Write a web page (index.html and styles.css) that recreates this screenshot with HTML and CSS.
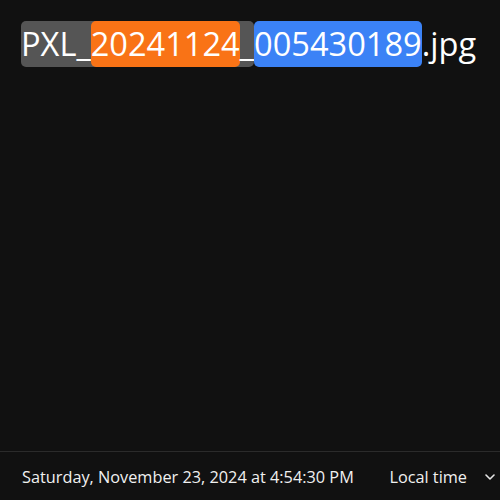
FILE: index.html
```html
<!DOCTYPE html>
<html lang="en">
<head>
<meta charset="utf-8">
<link rel="stylesheet" href="styles.css">
</head>
<body>
<div class="page">
  <main class="main">
    <h1 class="filename"><span class="seg-prefix">PXL_<span class="seg-date">20241124</span>_</span><span class="seg-time">005430189</span>.jpg</h1>
  </main>
  <footer class="footer">
    <span class="datetime">Saturday, November 23, 2024 at 4:54:30 PM</span>
    <div class="tz">
      <span class="tz-label">Local time</span>
      <svg class="chevron" width="10" height="6" viewBox="0 0 10 6"><path d="M1 1l4 4 4-4" fill="none" stroke="#e6e6e6" stroke-width="1.6" stroke-linecap="round" stroke-linejoin="round"/></svg>
    </div>
  </footer>
</div>
</body>
</html>
```
FILE: styles.css
```css
html, body {
  margin: 0;
  padding: 0;
  background: #111111;
  color: #ffffff;
  font-family: "Open Sans", "Noto Sans", sans-serif;
}
.page {
  display: flex;
  flex-direction: column;
  height: 100vh;
}
.main {
  flex: 1;
  padding: 21px 21px 0 21px;
}
.filename {
  margin: 0;
  font-size: 32.6px;
  font-weight: 400;
  line-height: 46px;
  white-space: nowrap;
}
.seg-prefix {
  display: inline-block;
  background: #555555;
  border-radius: 5px;
  vertical-align: top;
}
.seg-date {
  display: inline-block;
  background: #f97316;
  border-radius: 5px;
  vertical-align: top;
}
.seg-time {
  display: inline-block;
  background: #3b82f6;
  border-radius: 5px;
  vertical-align: top;
}
.footer {
  height: 46px;
  border-top: 1px solid #2b2b2b;
  display: flex;
  align-items: center;
  justify-content: space-between;
  padding: 2px 5px 0 22px;
  font-size: 16.3px;
  color: #f0f0f0;
}
.tz {
  display: flex;
  align-items: center;
  gap: 18px;
}
.chevron {
  display: block;
}
```
